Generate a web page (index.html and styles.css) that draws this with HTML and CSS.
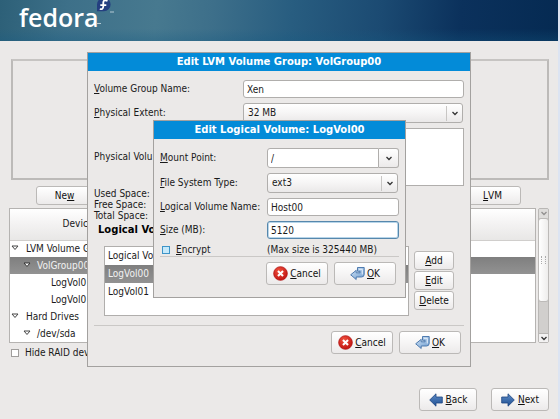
FILE: index.html
```html
<!DOCTYPE html>
<html lang="en">
<head>
<meta charset="utf-8">
<title>Fedora Installer</title>
<link rel="stylesheet" href="styles.css">
</head>
<body>
<svg class="defs" aria-hidden="true">
  <defs>
    <linearGradient id="blue" x1="0" y1="0" x2="0" y2="1"><stop offset="0" stop-color="#5d8cc6"/><stop offset="1" stop-color="#1f4f93"/></linearGradient>
    <linearGradient id="pale" x1="0" y1="0" x2="1" y2="1"><stop offset="0" stop-color="#d3e4f5"/><stop offset="1" stop-color="#6d9ccf"/></linearGradient>
    <radialGradient id="red" cx=".4" cy=".3" r=".8"><stop offset="0" stop-color="#f0503c"/><stop offset="1" stop-color="#bb0d0d"/></radialGradient>
  </defs>
  <symbol id="chevron" viewBox="0 0 6 5"><path d="M.5 1 3 3.5 5.500 1" fill="none" stroke="#333" stroke-width="1.300"/></symbol>
  <symbol id="expander" viewBox="0 0 8 6"><path d="M1 1H7L4 4.500Z" fill="#fff" stroke="#444"/></symbol>
  <symbol id="expander-on" viewBox="0 0 8 6"><path d="M1 1H7L4 4.500Z" fill="#fff" stroke="#333"/></symbol>
  <symbol id="cancel" viewBox="0 0 16 16"><circle cx="8" cy="8" r="7.300" fill="url(#red)" stroke="#b01010" stroke-width=".8"/><path d="M5.300 5.300 10.700 10.700M10.700 5.300 5.300 10.700" stroke="#fff" stroke-width="2.200"/></symbol>
  <symbol id="ok" viewBox="0 0 15 14"><path d="M.7 8.300 6.200 3.800V6.300H10V4.800H7.500V1H14.200V8Q14 10.500 11.500 10.500H6.200V13Z" fill="url(#pale)" stroke="#3f6fa8" stroke-width=".9"/><path d="M9 2.800H12.300V8" fill="none" stroke="#e3eefa"/></symbol>
  <symbol id="back" viewBox="0 0 14 14"><path d="M.7 7 7 .8V4H13.300V10H7V13.200Z" fill="url(#blue)" stroke="#1c4480" stroke-width=".8"/></symbol>
  <symbol id="next" viewBox="0 0 14 14"><path d="M13.300 7 7 .8V4H.7V10H7V13.200Z" fill="url(#blue)" stroke="#1c4480" stroke-width=".8"/></symbol>
</svg>

<header class="banner">
  <span class="brand">fedora</span>
  <svg class="mark" width="18" height="25" viewBox="0 0 18 25" aria-hidden="true">
    <path d="M0 4.500A6.800 6.800 0 1 1 6.800 11.300H0Z" fill="#243f80"/>
    <path d="M10.500 .8Q6.500-.8 6.300 2.500V6.500Q6 10 2.800 9M3.300 5.200H9.300" fill="none" stroke="#fff" stroke-width="1.800"/>
    <path d="M13 12H17M0 23.500H4" stroke="#b4cad4"/>
  </svg>
</header>

<main class="screen">
  <section class="drive-map" aria-label="Drive layout"></section>

  <div class="toolbar">
    <button type="button" class="btn tool">Ne<u>w</u></button>
    <button type="button" class="btn tool"><u>L</u>VM</button>
  </div>

  <div class="devices">
    <div class="tree-frame">
      <table class="tree">
        <thead><tr><th scope="col">Device</th><th scope="col"></th></tr></thead>
        <tbody>
          <tr><td><svg class="exp"><use href="#expander"/></svg>LVM Volume G</td><td></td></tr>
          <tr class="selected"><td class="level1"><svg class="exp"><use href="#expander-on"/></svg>VolGroup00</td><td></td></tr>
          <tr><td class="level2">LogVol0</td><td></td></tr>
          <tr><td class="level2">LogVol0</td><td></td></tr>
          <tr><td><svg class="exp"><use href="#expander"/></svg>Hard Drives</td><td></td></tr>
          <tr><td class="level1"><svg class="exp"><use href="#expander"/></svg>/dev/sda</td><td></td></tr>
        </tbody>
      </table>
    </div>
    <div class="scrollbar" aria-hidden="true">
      <span class="step up"><svg class="chev"><use href="#chevron"/></svg></span>
      <span class="thumb"><i class="grip"></i></span>
      <span class="step down"><svg class="chev"><use href="#chevron"/></svg></span>
    </div>
  </div>

  <label class="check"><input type="checkbox" class="box"><span>Hide RAID dev</span></label>

  <nav class="wizard">
    <button type="button" class="btn action"><svg class="arrow"><use href="#back"/></svg><span><u>B</u>ack</span></button>
    <button type="button" class="btn action"><svg class="arrow"><use href="#next"/></svg><span><u>N</u>ext</span></button>
  </nav>
</main>

<section class="dialog group-dialog" role="dialog" aria-labelledby="group-title">
  <h2 class="title" id="group-title">Edit LVM Volume Group: VolGroup00</h2>
  <form class="group-form">
    <div class="group-fields">
      <label for="vg-name"><u>V</u>olume Group Name:</label>
      <input class="entry" id="vg-name" type="text" value="Xen">
      <label for="extent"><u>P</u>hysical Extent:</label>
      <span class="select-wrap"><select class="select" id="extent"><option>32 MB</option></select><svg class="chev"><use href="#chevron"/></svg></span>
      <span class="label-text">Physical Volu</span>
      <div class="volumes"></div>
    </div>
    <ul class="space">
      <li>Used Space:</li>
      <li>Free Space:</li>
      <li>Total Space:</li>
    </ul>
    <h3 class="heading">Logical Vo</h3>
    <div class="logical">
      <div class="list-frame">
        <table class="list">
          <thead><tr><th scope="col">Logical Vo</th></tr></thead>
          <tbody>
            <tr class="selected"><td>LogVol00</td></tr>
            <tr><td>LogVol01</td></tr>
          </tbody>
        </table>
      </div>
      <div class="side">
        <button type="button" class="btn"><u>A</u>dd</button>
        <button type="button" class="btn"><u>E</u>dit</button>
        <button type="button" class="btn"><u>D</u>elete</button>
      </div>
    </div>
    <div class="actions">
      <button type="button" class="btn action"><svg class="ico"><use href="#cancel"/></svg><span><u>C</u>ancel</span></button>
      <button type="button" class="btn action"><svg class="ico"><use href="#ok"/></svg><span><u>O</u>K</span></button>
    </div>
  </form>
</section>

<section class="dialog volume-dialog" role="dialog" aria-labelledby="volume-title">
  <h2 class="title" id="volume-title">Edit Logical Volume: LogVol00</h2>
  <form class="volume-form">
    <div class="volume-fields">
      <label for="mount"><u>M</u>ount Point:</label>
      <span class="combo"><input class="entry" id="mount" type="text" value="/"><button type="button" class="drop" aria-label="Show mount points"><svg class="chev"><use href="#chevron"/></svg></button></span>
      <label for="fs"><u>F</u>ile System Type:</label>
      <span class="select-wrap"><select class="select" id="fs"><option>ext3</option></select><svg class="chev"><use href="#chevron"/></svg></span>
      <label for="lv-name"><u>L</u>ogical Volume Name:</label>
      <input class="entry" id="lv-name" type="text" value="Host00">
      <label for="size"><u>S</u>ize (MB):</label>
      <input class="entry focused" id="size" type="text" value="5120">
      <label class="check"><input type="checkbox" class="box hot"><span><u>E</u>ncrypt</span></label>
      <span class="hint">(Max size is 325440 MB)</span>
    </div>
    <div class="actions">
      <button type="button" class="btn action"><svg class="ico"><use href="#cancel"/></svg><span><u>C</u>ancel</span></button>
      <button type="button" class="btn action"><svg class="ico"><use href="#ok"/></svg><span><u>O</u>K</span></button>
    </div>
  </form>
</section>
</body>
</html>
```
FILE: styles.css
```css
* { box-sizing: border-box; }

body {
  margin: 0;
  min-height: 100vh;
  position: relative;
  border-right: 2px solid #dce4f2;
  background: #ebe9e8;
  color: #1a1a1a;
  font: 10px/12px "DejaVu Sans Condensed", "DejaVu Sans", sans-serif;
  overflow: hidden;
}

.defs { position: absolute; width: 0; height: 0; }
u { text-underline-offset: 1px; }
button, input, select { font: inherit; color: inherit; margin: 0; }

/* Banner */
.banner {
  display: flex;
  height: 41px;
  margin-right: -2px;
  padding-left: 19px;
  background:
    linear-gradient(to bottom, transparent 70%, rgba(20, 90, 130, .3)),
    linear-gradient(95deg, #2d6078 0%, #3d7089 12%, #47798f 28%, #3d6f8a 38%, #285d80 52%, #1b4a72 68%, #0b315c 82%, #052a52 100%);
  color: #fff;
}
.brand { font: 600 25px/34px "Open Sans", sans-serif; }
.mark { margin-left: -2px; }

/* Partitioning screen */
.screen { padding: 18px 9px 0; }
.drive-map { height: 121px; margin: 0 0 6px 2px; border: 2px solid #bcbab8; border-top-color: #c6c4c2; }
.toolbar { display: flex; justify-content: space-between; padding: 0 28px 0 27px; margin-bottom: 3px; }
.tool { width: 57px; }

.btn {
  display: flex;
  align-items: center;
  justify-content: center;
  height: 19px;
  padding: 0;
  border: 1px solid #bbb9b7;
  border-radius: 3px;
  background: linear-gradient(#fff, #f6f5f5 50%, #eceaea);
  color: #111;
}
.action { height: 23px; gap: 2px; }
.ico { width: 15px; height: 15px; }
.arrow { width: 14px; height: 14px; margin-right: 1px; }

.devices { display: flex; gap: 2px; margin-bottom: 4px; }
.tree-frame { flex: 1; border: 1px solid #b5b3b1; background: #fff; }
.tree, .list { width: 100%; border-collapse: collapse; table-layout: fixed; }
.tree th:first-child { width: 118px; }
.tree th {
  height: 31px;
  padding: 0;
  border-bottom: 1px solid #d0cecc;
  background: linear-gradient(#fff, #f4f3f3 45%, #e8e7e6);
  font-weight: normal;
}
.tree th:first-child { padding-left: 18px; }
.tree td { height: 17px; padding: 0 0 0 1px; overflow: hidden; white-space: nowrap; }
.tree .level1 { padding-left: 13px; }
.tree .level2 { padding-left: 41px; }
.exp { width: 8px; height: 6px; margin-right: 7px; vertical-align: 1px; }
.tree .level1 .exp { margin-right: 6px; }
.selected { background: linear-gradient(#7f7f7f, #929292); color: #f2f2f2; }

.scrollbar { display: flex; flex-direction: column; width: 11px; border: 1px solid #b9b7b5; border-radius: 2px; background: #d1cfcd; }
.step { display: grid; place-items: center; height: 9px; background: #f3f2f2; }
.up { opacity: .4; }
.down { margin-top: auto; border-top: 1px solid #b9b7b5; }
.thumb { display: grid; place-items: center; height: 84px; border: 1px solid #bcbab8; border-radius: 3px; margin: 0 -1px; background: linear-gradient(to right, #fff, #eeedec); }
.grip { width: 5px; height: 8px; border-left: 1px dotted #aaa; border-right: 1px dotted #aaa; }
.chev { width: 6px; height: 5px; }

.check { display: flex; align-items: center; gap: 6px; }
.screen .check { padding-left: 2px; }
.box { appearance: none; width: 8px; height: 8px; border: 1px solid #a09e9c; background: #fff; }
.hot { border-color: #3d94c8; background: #c6e9fa; }

.wizard { display: flex; justify-content: flex-end; gap: 14px; margin-top: 29px; }
.wizard .btn { width: 58px; }

/* Dialogs float above the screen */
.dialog { position: absolute; border: 1px solid #a3a19f; background: #ebe9e8; }
.group-dialog { top: 52px; left: 87px; right: 87px; height: 315px; }
.volume-dialog { top: 120px; left: 153px; right: 152px; height: 178px; }
.title { margin: 0; background: #038bd8; color: #fff; font: bold 10px/18px "DejaVu Sans", sans-serif; text-align: center; }

.group-form { padding: 9px 6px 0; }
.group-fields { display: grid; grid-template-columns: 149px 1fr; row-gap: 5px; align-items: center; }
.entry { width: 100%; min-width: 0; height: 18px; padding: 0 3px; border: 1px solid #b0aeac; border-radius: 3px; background: #fff; outline: 0; }
.focused { border-color: #5687ac; box-shadow: inset 0 0 0 1px #b7d5e9; }
.select-wrap { display: flex; align-items: center; }
.select { appearance: none; flex: 1; height: 20px; padding: 0 4px; border: 1px solid #b0aeac; border-radius: 3px; background: linear-gradient(#fff, #f6f5f5 50%, #eae8e8); }
.select-wrap .chev { box-sizing: content-box; width: 6px; margin-left: -17px; padding: 5px; padding-right: 6px; border-left: 1px solid #c8c6c4; }
.volumes { height: 58px; border: 1px solid #b0aeac; background: #fff; }
.label-text { white-space: nowrap; }

.space { margin: 2px 0 0; padding: 0; list-style: none; line-height: 11px; }
.heading { margin: 2px 0 9px 4px; font: bold 10px/14px "DejaVu Sans", sans-serif; color: #000; }
.logical { display: flex; gap: 5px; padding: 0 10px 0 10px; }
.list-frame { flex: 1; height: 70px; border: 1px solid #b0aeac; background: #fff; }
.list th { height: 18px; padding: 0 3px; font-weight: normal; text-align: left; }
.list td { height: 18px; padding: 0 3px; }
.side { display: flex; flex-direction: column; gap: 1px; width: 40px; padding-top: 5px; }

.actions { display: flex; justify-content: flex-end; gap: 6px; padding: 5px 3px 0; border-top: 1px solid #cac8c6; }
.actions .btn { width: 62px; }
.group-form .actions { margin-top: 9px; }

.volume-form { padding: 9px 6px 0; }
.volume-fields { display: grid; grid-template-columns: 107px 1fr; row-gap: 5px; align-items: center; white-space: nowrap; }
.combo { display: flex; }
.combo .entry { flex: 1; height: 20px; border-radius: 3px 0 0 3px; }
.drop { display: grid; place-items: center; width: 20px; height: 20px; padding: 0; border: 1px solid #b0aeac; border-left: 0; border-radius: 0 3px 3px 0; background: linear-gradient(#fff, #eceaea); }
.volume-fields .check { padding-left: 2px; }
```
